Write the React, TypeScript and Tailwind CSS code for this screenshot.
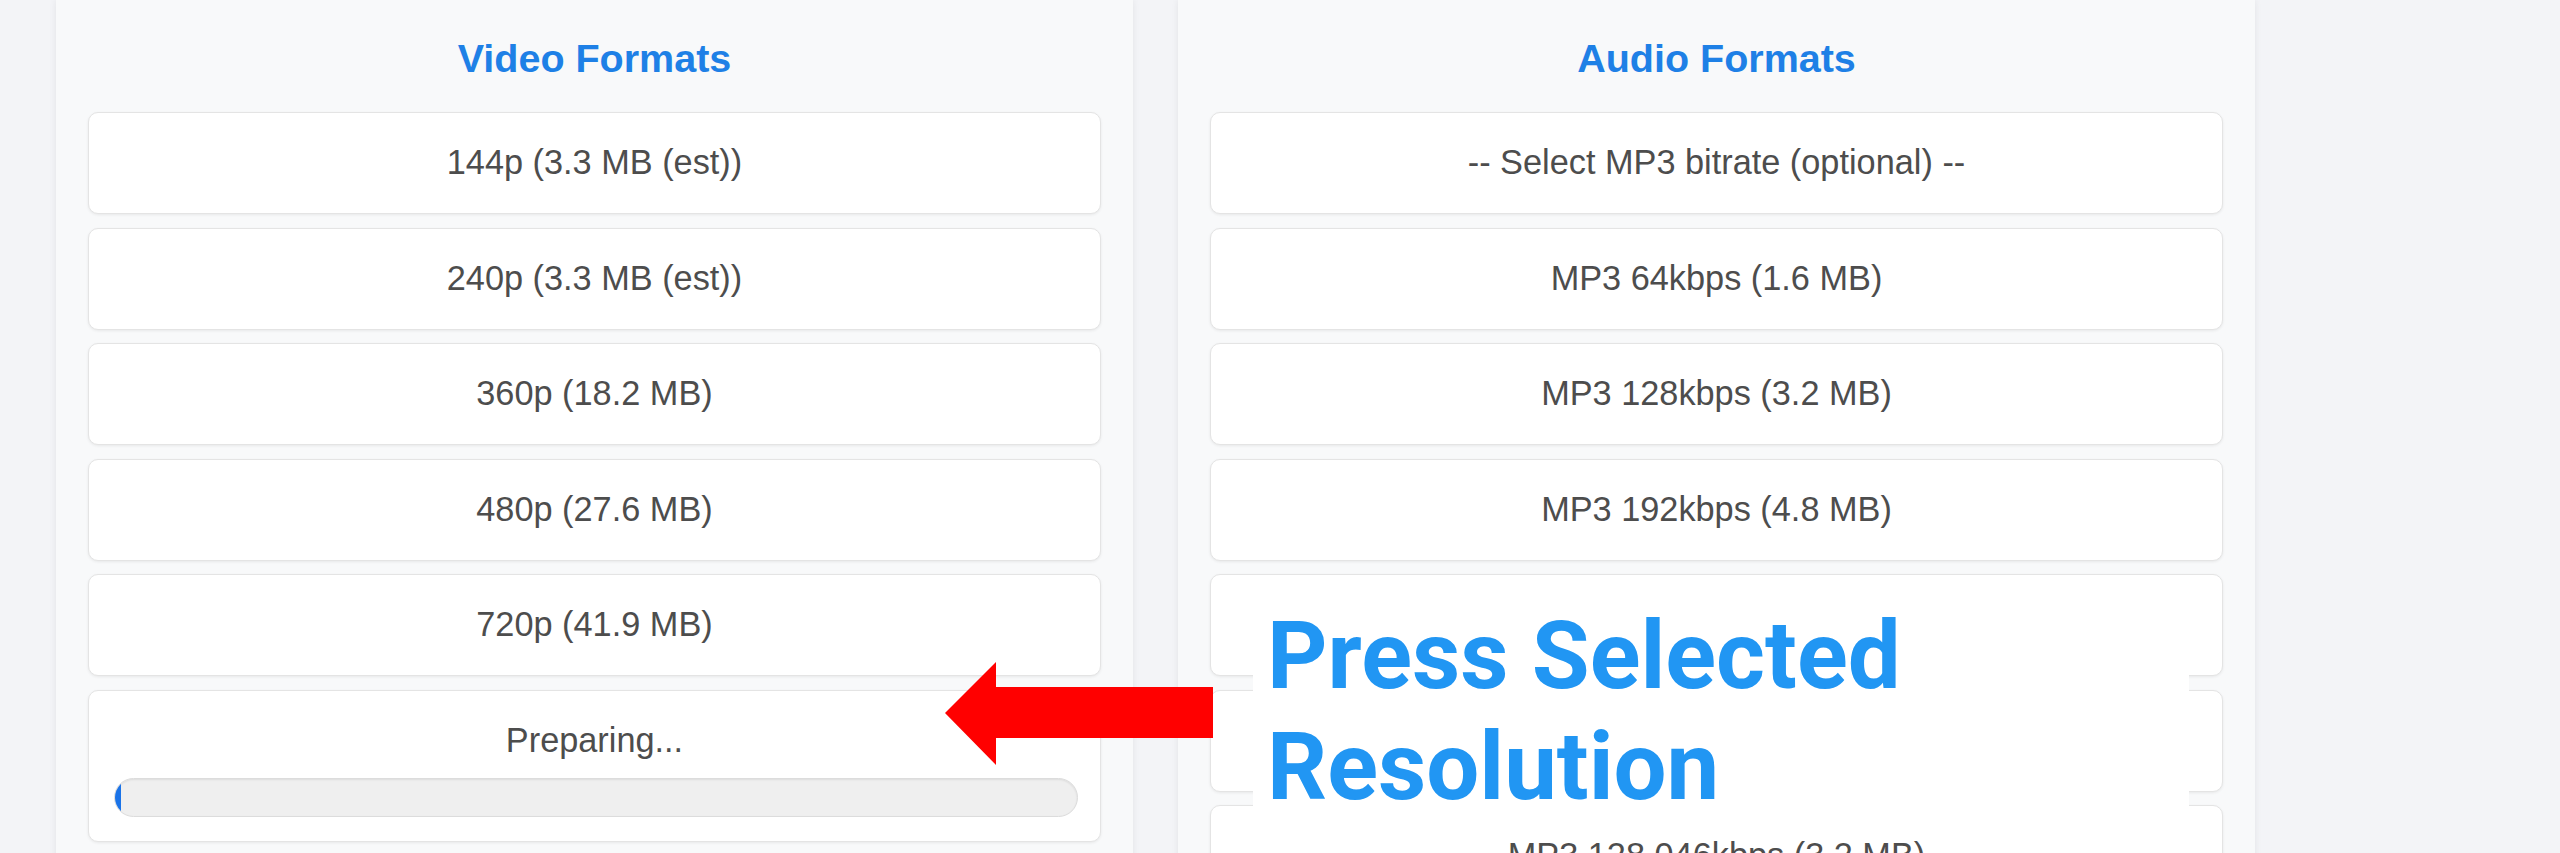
import React from "react";

const videoItems = [
  "144p (3.3 MB (est))",
  "240p (3.3 MB (est))",
  "360p (18.2 MB)",
  "480p (27.6 MB)",
  "720p (41.9 MB)",
];

const audioItems = [
  "-- Select MP3 bitrate (optional) --",
  "MP3 64kbps (1.6 MB)",
  "MP3 128kbps (3.2 MB)",
  "MP3 192kbps (4.8 MB)",
  "",
  "",
  "MP3 128.046kbps (3.2 MB)",
];

function FormatButton({ label }: { label: string }) {
  return (
    <div className="h-[102px] shrink-0 rounded-[10px] border border-[#e4e4e4] bg-white shadow-[0_1px_3px_rgba(0,0,0,0.07)] flex items-center justify-center text-[34.3px] text-[#4d4d4d]">
      {label}
    </div>
  );
}

function Panel({ title, children }: { title: string; children: React.ReactNode }) {
  return (
    <div className="w-[1077px] shrink-0 h-[900px] bg-[#f8f9fa] shadow-[0_0_7px_rgba(0,0,0,0.07)] px-[32px] pt-[30px]">
      <h2 className="text-center text-[39.5px] leading-[56px] font-bold text-[#1e80e6]">{title}</h2>
      <div className="mt-[26px] flex flex-col gap-[13.5px]">{children}</div>
    </div>
  );
}

export default function App() {
  return (
    <div
      className="relative w-[2560px] h-[853px] overflow-hidden bg-[#f3f4f7] flex gap-[45px] pl-[56px]"
      style={{ fontFamily: '"Liberation Sans", Arial, sans-serif' }}
    >
      <Panel title="Video Formats">
        {videoItems.map((v) => (
          <FormatButton key={v} label={v} />
        ))}
        <div className="h-[152px] shrink-0 rounded-[10px] border border-[#e4e4e4] bg-white shadow-[0_1px_3px_rgba(0,0,0,0.07)] flex flex-col">
          <div className="mt-[29px] text-center text-[34.3px] leading-[40px] text-[#4d4d4d]">Preparing...</div>
          <div className="mt-[18px] ml-[25px] mr-[22px] h-[39px] rounded-full bg-[#efefef] border border-[#dcdcdc] shadow-[inset_0_1px_2px_rgba(0,0,0,0.08)] overflow-hidden">
            <div className="h-full w-[6px] rounded-l-full bg-[#1a73e8]" />
          </div>
        </div>
      </Panel>
      <Panel title="Audio Formats">
        {audioItems.map((a, i) => (
          <FormatButton key={i} label={a} />
        ))}
      </Panel>

      <svg
        className="absolute left-[945px] top-[662px]"
        width="268"
        height="103"
        viewBox="0 0 268 103"
      >
        <polygon points="0,51 51,0 51,25 268,25 268,76 51,76 51,103" fill="#ff0000" />
      </svg>

      <div
        className="absolute left-[1253px] top-[601px] w-[936px] h-[218px] bg-white pl-[14px] text-[94px] leading-[111px] font-bold text-[#2196f3]"
        style={{ fontFamily: 'Roboto, "Noto Sans", sans-serif' }}
      >
        Press Selected
        <br />
        Resolution
      </div>
    </div>
  );
}
